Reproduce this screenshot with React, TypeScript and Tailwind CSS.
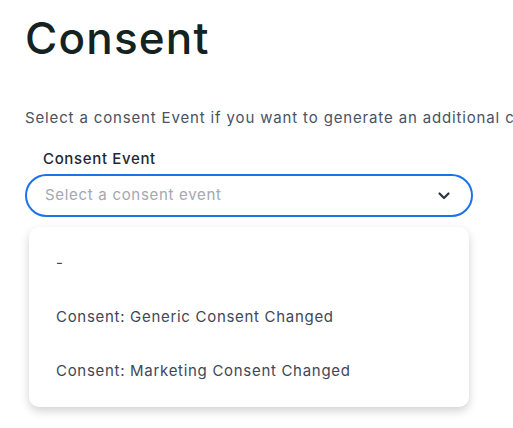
import React from "react";

export default function App() {
  return (
    <div className="w-[513px] h-[428px] overflow-hidden bg-white" style={{ fontFamily: "Inter, 'Noto Sans', sans-serif" }}>
      <div className="pl-[25px] pt-[12px]">
        <h1 className="text-[44px] leading-[52px] font-medium text-[#142221] tracking-[1.2px]">Consent</h1>
        <p className="mt-[44px] text-[15px] leading-[20px] text-[#4a5263] whitespace-nowrap tracking-[0.85px]">
          Select a consent Event if you want to generate an additional consent event
        </p>
        <div className="mt-[21px] pl-[18px] text-[15px] leading-[20px] font-medium text-[#1f2733] tracking-[0.65px]">Consent Event</div>
        <div className="relative mt-[5px] w-[448px]">
          <div className="h-[43px] rounded-full border-2 border-[#1a73e8] flex items-center pl-[18px] pr-[20px] justify-between">
            <span className="text-[15px] text-[#a3a8b2] tracking-[0.7px]">Select a consent event</span>
            <svg width="14" height="14" viewBox="0 0 14 14" fill="none">
              <path d="M2.5 4.5 L7 9 L11.5 4.5" stroke="#2f3640" strokeWidth="2.2" strokeLinecap="round" strokeLinejoin="round" />
            </svg>
          </div>
          <div className="mt-[10px] ml-[4px] w-[440px] rounded-[10px] bg-white shadow-[0_4px_10px_rgba(0,0,0,0.18)] py-[9px]">
            {["-", "Consent: Generic Consent Changed", "Consent: Marketing Consent Changed"].map((t) => (
              <div key={t} className="h-[54px] flex items-center pl-[27px] text-[15px] text-[#3f4756] tracking-[0.7px]">
                {t}
              </div>
            ))}
          </div>
        </div>
      </div>
    </div>
  );
}
